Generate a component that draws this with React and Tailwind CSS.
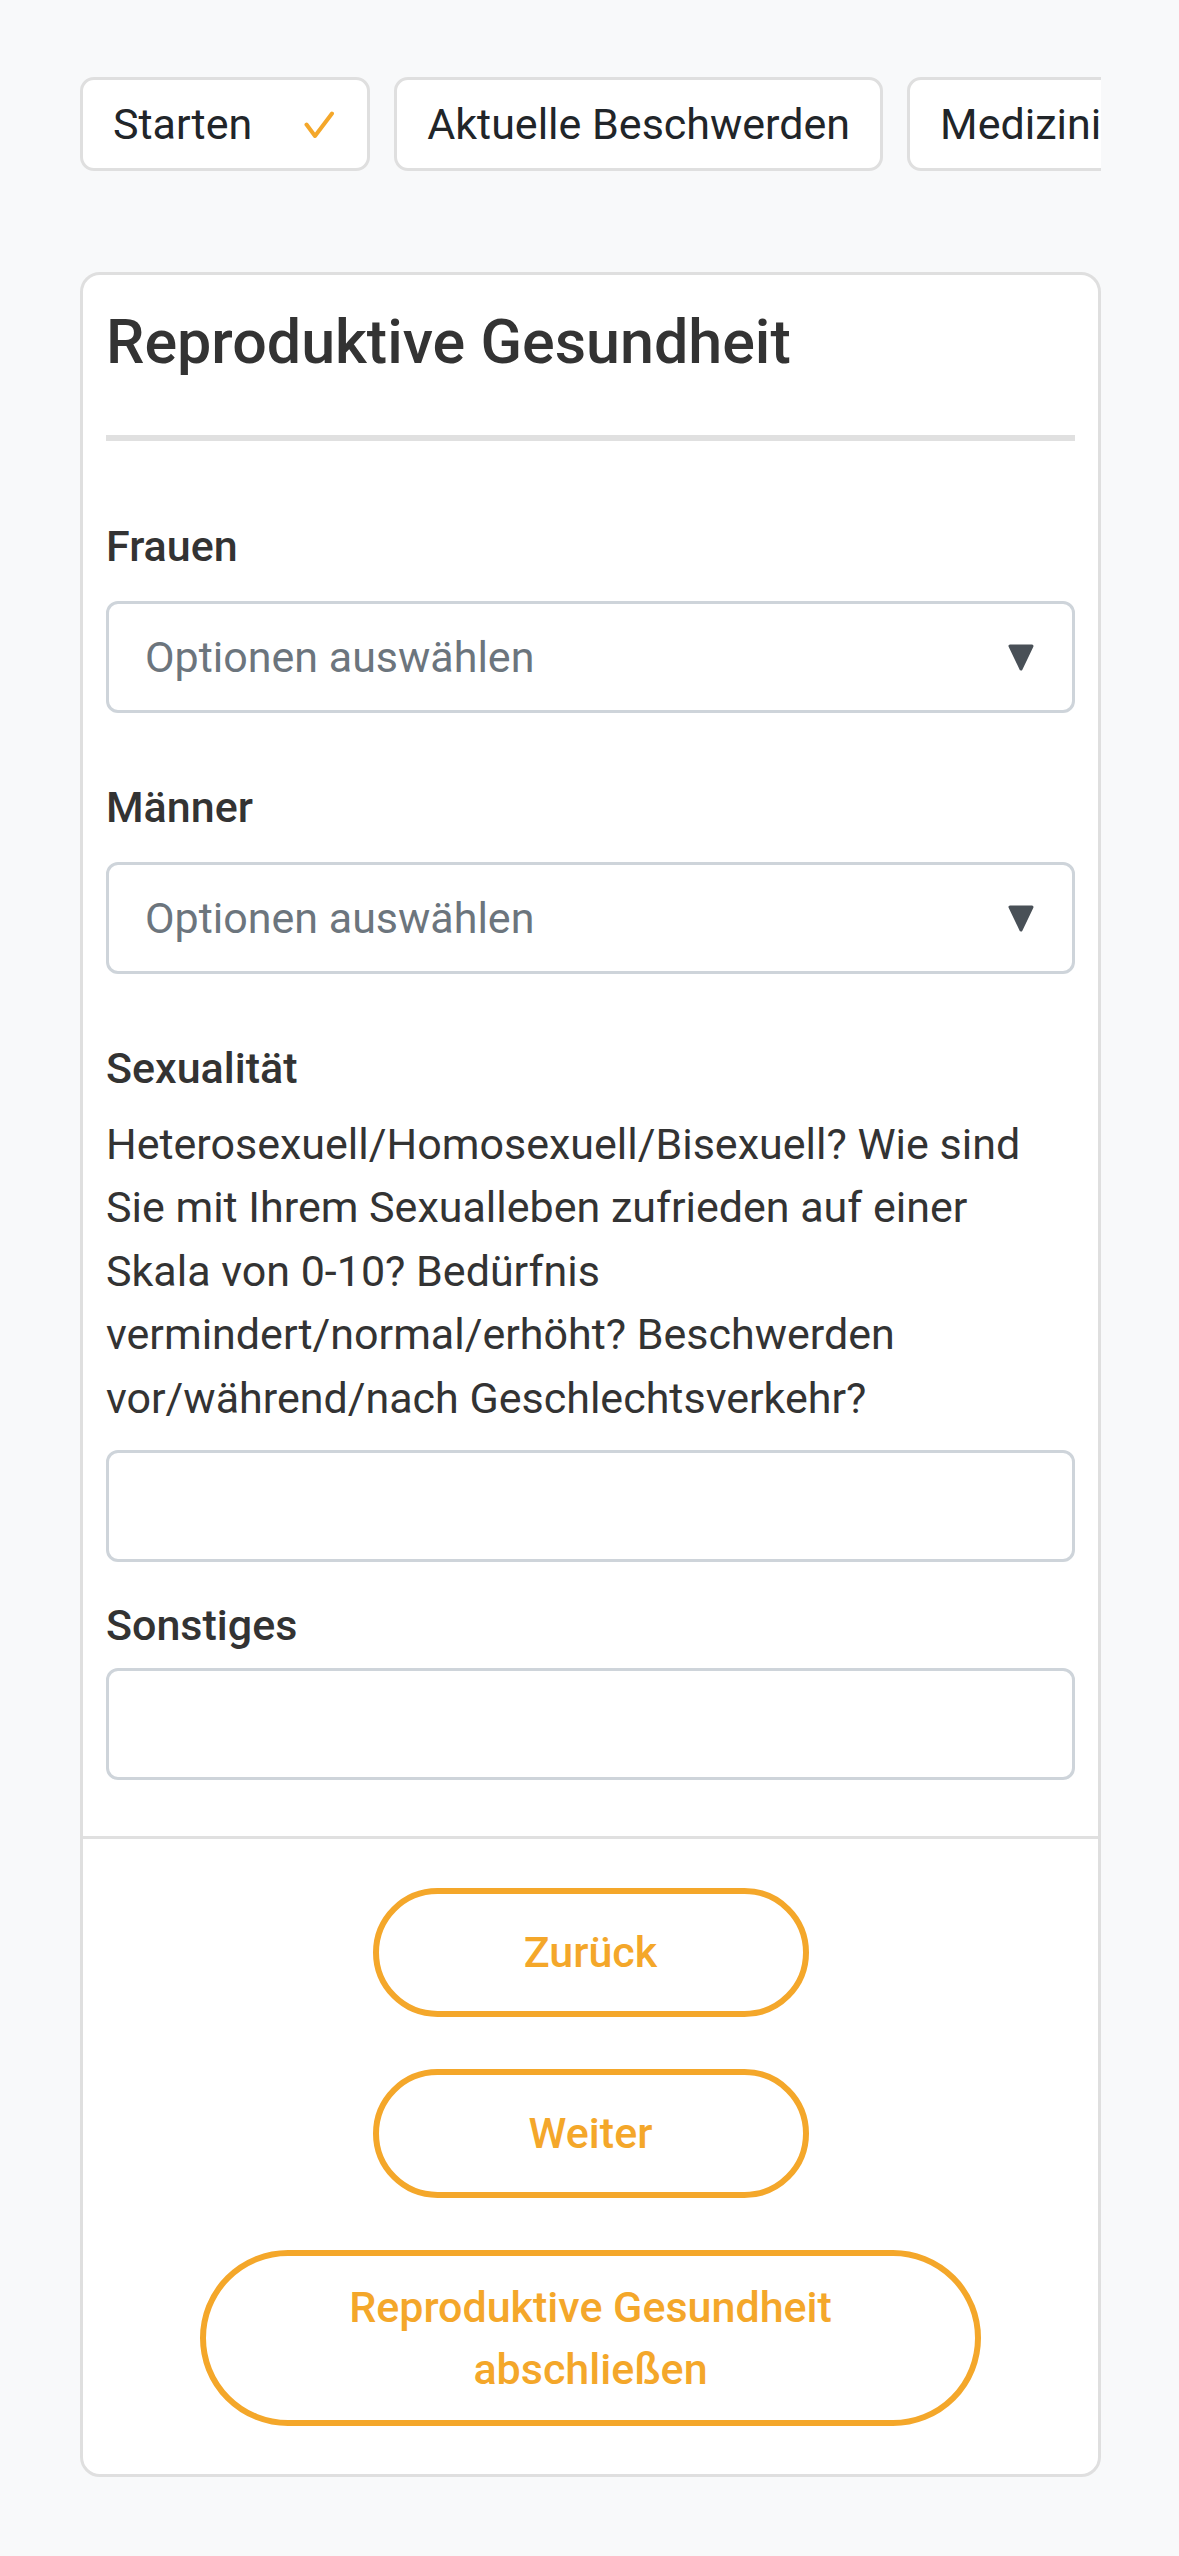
import { useState } from "react";

const steps = [
  { key: "start", label: "Starten", done: true },
  { key: "complaints", label: "Aktuelle Beschwerden", done: false },
  { key: "history", label: "Medizinische Vorgeschichte", done: false },
];

const CheckMark = () => (
  <svg width="30" height="27" viewBox="0 0 30 27" fill="none">
    <polyline
      points="2.5,13.5 11,25 28,2.5"
      stroke="#f4a72a"
      strokeWidth="4"
      strokeLinecap="round"
      strokeLinejoin="round"
    />
  </svg>
);

const Caret = () => (
  <svg width="26" height="27" viewBox="0 0 26 27">
    <polygon
      points="2,2 24,2 13,25"
      fill="#495057"
      stroke="#495057"
      strokeWidth="3"
      strokeLinejoin="round"
    />
  </svg>
);

const StepTabs = () => (
  <div className="flex gap-[24px] overflow-hidden">
    {steps.map(({ key, label, done }) => (
      <div
        key={key}
        className={`flex h-[94px] shrink-0 items-center rounded-[14px] border-[3px] border-[#dfdfdf] bg-white pl-[30px] text-[43px] whitespace-nowrap text-[#212529] ${
          done ? "pr-[33px]" : "pr-[30px]"
        }`}
      >
        <span>{label}</span>
        {done && (
          <span className="ml-[52px] flex">
            <CheckMark />
          </span>
        )}
      </div>
    ))}
  </div>
);

const MultiSelect = ({ placeholder }) => (
  <button
    type="button"
    className="flex h-[112px] w-full items-center justify-between rounded-[12px] border-[3px] border-[#ced4da] bg-white pr-[38px] pl-[36px] text-left"
  >
    <span className="text-[43px] text-[#6c757d]">{placeholder}</span>
    <Caret />
  </button>
);

const TextField = ({ value, onChange }) => (
  <input
    type="text"
    value={value}
    onChange={(e) => onChange(e.target.value)}
    className="block h-[112px] w-full rounded-[12px] border-[3px] border-[#ced4da] bg-white px-[36px] text-[43px] text-[#333] outline-none"
  />
);

const FieldLabel = ({ children, className = "" }) => (
  <div className={`text-[43px] leading-[63px] font-medium text-[#333] ${className}`}>
    {children}
  </div>
);

const OutlineButton = ({ children, className = "" }) => (
  <button
    type="button"
    className={`flex items-center justify-center rounded-full border-[6px] border-[#f4a72a] bg-white text-center text-[43px] leading-[62px] font-medium text-[#f4a72a] ${className}`}
  >
    {children}
  </button>
);

export default function App() {
  const [sexuality, setSexuality] = useState("");
  const [other, setOther] = useState("");

  return (
    <div className="min-h-screen bg-[#f8f9fa] pt-[77px] pr-[78px] pb-[79px] pl-[80px] font-['Roboto',sans-serif]">
      <StepTabs />

      <div className="mt-[101px] overflow-hidden rounded-[20px] border-[3px] border-[#dfdfdf] bg-white">
        <div className="px-[23px] pt-[31px] pb-[56px]">
          <h5 className="text-[61px] leading-[72px] font-medium text-[#333]">
            Reproduktive Gesundheit
          </h5>
          <div className="mt-[57px] h-[6px] bg-[#e0e0e0]" />

          <FieldLabel className="mt-[73.5px] mb-[23.5px]">Frauen</FieldLabel>
          <MultiSelect placeholder="Optionen auswählen" />

          <FieldLabel className="mt-[62.5px] mb-[23.5px]">Männer</FieldLabel>
          <MultiSelect placeholder="Optionen auswählen" />

          <FieldLabel className="mt-[62.5px]">Sexualität</FieldLabel>
          <p className="mt-[13px] text-[43px] leading-[63.6px] text-[#333]">
            Heterosexuell/Homosexuell/Bisexuell? Wie sind Sie mit Ihrem
            Sexualleben zufrieden auf einer Skala von 0-10? Bedürfnis
            vermindert/normal/erhöht? Beschwerden vor/während/nach
            Geschlechtsverkehr?
          </p>
          <div className="mt-[19.5px]">
            <TextField value={sexuality} onChange={setSexuality} />
          </div>

          <FieldLabel className="mt-[32.5px] mb-[10.5px]">Sonstiges</FieldLabel>
          <TextField value={other} onChange={setOther} />
        </div>

        <div className="flex flex-col items-center gap-[52px] border-t-[3px] border-[#e0e0e0] pt-[49px] pb-[48px]">
          <OutlineButton className="h-[129px] w-[436px]">Zurück</OutlineButton>
          <OutlineButton className="h-[129px] w-[436px]">Weiter</OutlineButton>
          <OutlineButton className="h-[176px] w-[781px] px-[60px]">
            Reproduktive Gesundheit abschließen
          </OutlineButton>
        </div>
      </div>
    </div>
  );
}
